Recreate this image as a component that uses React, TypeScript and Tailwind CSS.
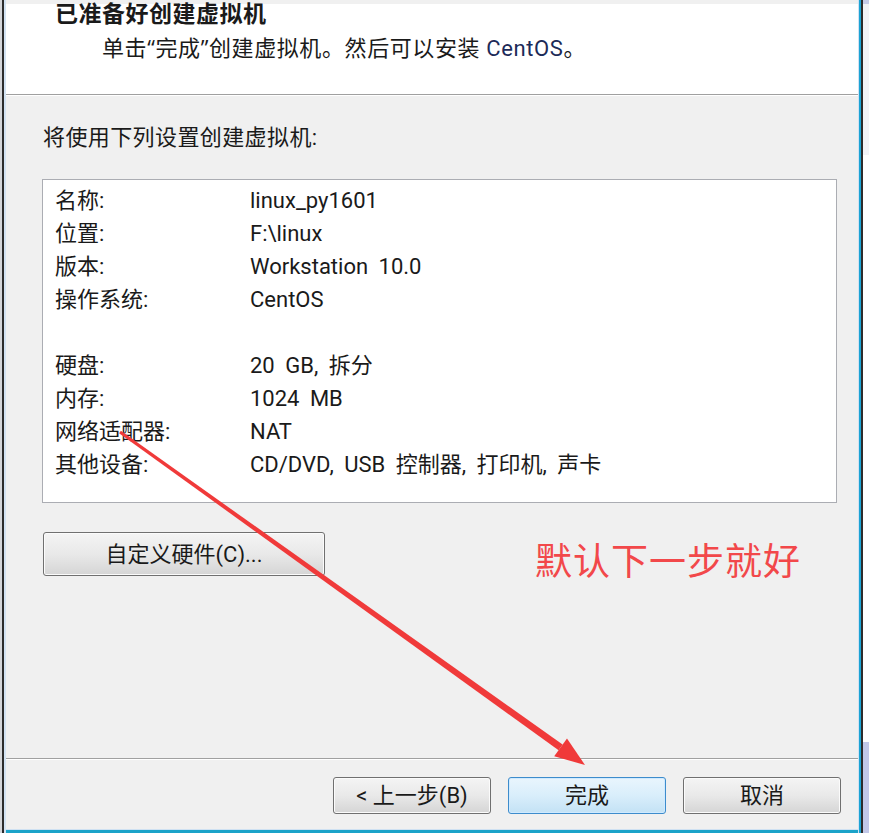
import React from "react";

const rows: [string, string][] = [
  ["名称:", "linux_py1601"],
  ["位置:", "F:\\linux"],
  ["版本:", "Workstation 10.0"],
  ["操作系统:", "CentOS"],
  ["", ""],
  ["硬盘:", "20 GB, 拆分"],
  ["内存:", "1024 MB"],
  ["网络适配器:", "NAT"],
  ["其他设备:", "CD/DVD, USB 控制器, 打印机, 声卡"],
];

const btn =
  "h-[37px] w-[158px] rounded-[3px] border border-[#707070] bg-linear-to-b from-[#f4f4f4] via-[#e9e9e9] to-[#d5d5d5] shadow-[inset_0_0_0_1px_#fbfbfb] flex items-center justify-center text-[22px] text-[#1a1a1a]";

export default function App() {
  return (
    <div className="relative w-[869px] h-[833px] overflow-hidden flex bg-white font-['Roboto','Noto_Sans_CJK_SC',sans-serif] text-[#1a1a1a]">
      {/* left window edge */}
      <div className="w-[2px] h-full bg-[#d4d6da]" />
      <div className="w-[2px] h-full bg-[#2c2c2c]" />
      <div className="w-[2px] h-full bg-[#d3e3f3]" />

      {/* dialog */}
      <div className="w-[852px] h-full flex flex-col">
        <div className="h-[4px] bg-[#f0f0f0]" />
        <div className="h-[90px] bg-white">
          <div className="pl-[49px] text-[23px] leading-[22px] font-bold tracking-[0.5px]">
            已准备好创建虚拟机
          </div>
          <div className="mt-[9px] pl-[96px] text-[22px] leading-[24px] tracking-[0.6px]">
            单击<span className="font-['Open_Sans',sans-serif]">“</span>完成
            <span className="font-['Open_Sans',sans-serif]">”</span>创建虚拟机。然后可以安装{" "}
            <span className="text-[#1c2a58]">CentOS</span>。
          </div>
        </div>
        <div className="h-px bg-[#a0a0a0]" />
        <div className="h-px bg-white" />

        <div className="flex-1 bg-[#f0f0f0] pt-[29px] pl-[36px]">
          <div className="pl-px text-[22px] leading-[26px] tracking-[0.4px]">将使用下列设置创建虚拟机:</div>
          <div className="mt-[28px] w-[795px] h-[324px] border border-[#abadb3] bg-white pt-[4px] pl-[12px]">
            {rows.map(([k, v], i) => (
              <div key={i} className="flex h-[33px] items-center text-[22px] leading-[33px]">
                <span className="w-[195px] shrink-0">{k}</span>
                <span className="[word-spacing:5px]">{v}</span>
              </div>
            ))}
          </div>
          <div className="mt-[29px] flex items-start">
            <div className="ml-px h-[44px] w-[282px] rounded-[3px] border border-[#707070] bg-linear-to-b from-[#f4f4f4] via-[#e9e9e9] to-[#d5d5d5] shadow-[inset_0_0_0_1px_#fbfbfb] flex items-center justify-center text-[22px]">
              自定义硬件(C)...
            </div>
            <div className="ml-[210px] mt-[5px] text-[37px] leading-[44px] text-[#f2484a] tracking-[1px] font-['Noto_Sans_CJK_SC',sans-serif]">
              默认下一步就好
            </div>
          </div>
        </div>

        <div className="h-px bg-[#a0a0a0]" />
        <div className="h-px bg-white" />
        <div className="h-[69px] bg-[#f0f0f0] flex items-start justify-end pr-[17px] pt-[17px] gap-[17px]">
          <div className={btn}>&lt; 上一步(B)</div>
          <div className="h-[37px] w-[158px] rounded-[3px] border border-[#3d8ccc] bg-linear-to-b from-[#e9f5fd] via-[#d9eefb] to-[#c3e2f5] shadow-[inset_0_0_0_1px_#cfeaff] flex items-center justify-center text-[22px]">
            完成
          </div>
          <div className={btn}>取消</div>
        </div>
        <div className="h-px bg-[#cfe1f2]" />
        <div className="h-[3px] bg-[#1ba3c9]" />
      </div>

      {/* right window edge */}
      <div className="w-px h-full bg-[#cfe1f2]" />
      <div className="w-[2px] h-full bg-[#1ba3d4]" />
      <div className="w-[2px] h-full bg-[#2c2c2c]" />
      <div className="w-[6px] h-full flex flex-col">
        <div className="h-[4px] bg-[#c5cbe8]" />
        <div className="h-[151px] bg-[#f2f3f7]" />
        <div className="h-[587px] bg-white" />
        <div className="flex-1 bg-[#c2c8e8]" />
      </div>

      {/* red annotation arrow */}
      <svg className="absolute inset-0 pointer-events-none" width="869" height="833" viewBox="0 0 869 833">
        <polygon
          points="119.1,433.2 120.9,430.8 562.6,744.6 558.6,750.2"
          fill="#f03a3a"
        />
        <polygon points="585,765 554.2,756.3 567.0,738.5" fill="#f03a3a" />
      </svg>
    </div>
  );
}
